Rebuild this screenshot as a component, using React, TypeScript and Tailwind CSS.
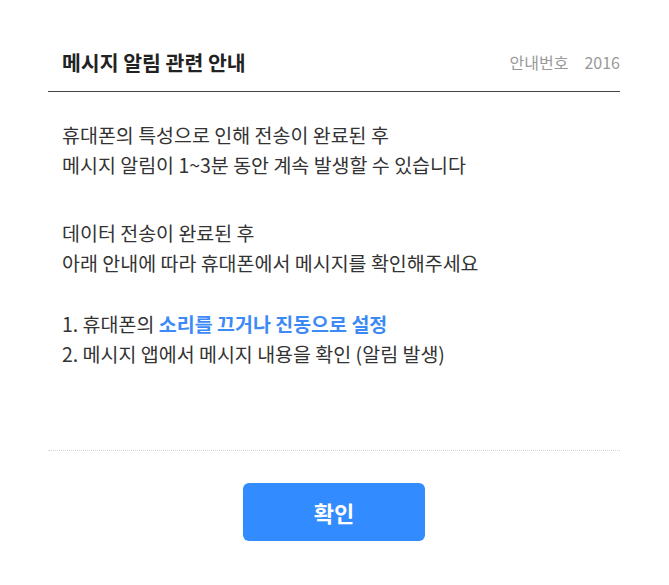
import React from "react";

export default function App() {
  const font = { fontFamily: '"Noto Sans CJK KR", "Noto Sans", sans-serif' };
  return (
    <div className="w-[669px] h-[585px] bg-white pl-[48px] pr-[49px]" style={font}>
      <div className="flex items-center justify-between pt-[47px] pb-[14px] pl-[14px] border-b border-[#444]">
        <h1 className="text-[20.5px] leading-[30px] font-bold text-[#222]">메시지 알림 관련 안내</h1>
        <div className="flex items-center gap-[16px] text-[16px] leading-[30px] text-[#999]">
          <span>안내번호</span>
          <span>2016</span>
        </div>
      </div>
      <div className="pl-[14px] pt-[28px] text-[19.5px] leading-[30px] text-[#333]">
        <p>휴대폰의 특성으로 인해 전송이 완료된 후</p>
        <p>메시지 알림이 1~3분 동안 계속 발생할 수 있습니다</p>
        <p className="mt-[38px]">데이터 전송이 완료된 후</p>
        <p>아래 안내에 따라 휴대폰에서 메시지를 확인해주세요</p>
        <p className="mt-[31px]">
          1. 휴대폰의 <span className="text-[#3d8af7] font-bold">소리를 끄거나 진동으로 설정</span>
        </p>
        <p>2. 메시지 앱에서 메시지 내용을 확인 (알림 발생)</p>
      </div>
      <div className="mt-[81px] border-t border-dotted border-[#d5d5d5]" />
      <div className="flex justify-center pt-[32px]">
        <button className="w-[182px] h-[58px] rounded-[6px] bg-[#338cff] text-white text-[22px] font-bold">
          확인
        </button>
      </div>
    </div>
  );
}
